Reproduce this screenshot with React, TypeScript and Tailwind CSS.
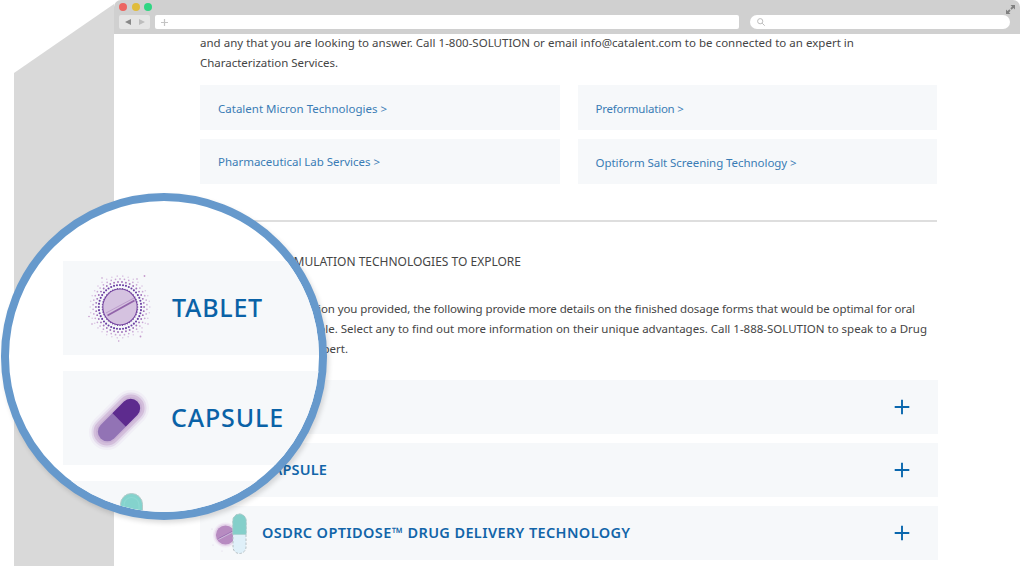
import React from 'react';

const ring = (count: number, radius: number, size: number, color: string, offset = 0) =>
  Array.from({ length: count }, (_, i) => {
    const a = ((i + offset) / count) * Math.PI * 2;
    return <circle key={`${radius}-${i}`} cx={40 + Math.cos(a) * radius} cy={39 + Math.sin(a) * radius * 1.04} r={size} fill={color} />;
  });

function TabletIcon() {
  return (
    <svg width="80" height="80" viewBox="0 0 80 80" className="shrink-0">
      <ellipse cx="40" cy="39" rx="17.2" ry="18" fill="#d5c2e0" stroke="#7646a0" strokeWidth="1.1" />
      {ring(44, 17.8, 0.6, '#6b3a9b')}
      {ring(44, 21.2, 1.05, '#6b3fa3')}
      {ring(38, 24.1, 0.95, '#a070b9')}
      {ring(38, 27, 0.85, '#c9a6d4', 0.5)}
      {ring(34, 29.8, 0.8, '#dcc6e4')}
      <path d="M26 45 54 30" stroke="#bd9dcc" strokeWidth="1" />
      <path d="M27.5 47.5 54.5 32.5" stroke="#9264aa" strokeWidth="1.9" />
      <g fill="#c49bcc">
        <circle cx="64.5" cy="8" r="0.9" /><circle cx="22" cy="10" r="0.8" /><circle cx="57" cy="11" r="0.8" />
        <circle cx="9" cy="48.5" r="0.8" /><circle cx="12" cy="56" r="0.8" /><circle cx="38.7" cy="73" r="0.8" />
        <circle cx="60.5" cy="68.5" r="0.9" /><circle cx="62" cy="64" r="0.7" /><circle cx="68" cy="56" r="0.7" />
      </g>
    </svg>
  );
}

function CapsuleIcon() {
  return (
    <svg width="80" height="80" viewBox="0 0 80 80" className="shrink-0">
      <g transform="translate(0 1.5) rotate(-45 39 40.5)">
        <rect x="4" y="22.5" width="70" height="36" rx="18" fill="#f1eff6" />
        <rect x="6.5" y="25" width="65" height="31" rx="15.5" fill="#e4dbec" />
        <rect x="8.5" y="27" width="61" height="27" rx="13.5" fill="#d3bedb" />
        <rect x="11" y="29.5" width="56" height="22" rx="11" fill="#c9b1d5" />
        <path d="M39 31H22.5a9.5 9.5 0 0 0 0 19H39z" fill="#9273b5" />
        <path d="M39 31h16.5a9.5 9.5 0 0 1 0 19H39z" fill="#5d2b8e" />
      </g>
    </svg>
  );
}

function OptidoseIcon() {
  return (
    <svg width="40" height="46" viewBox="0 0 40 46" className="shrink-0">
      <circle cx="15.5" cy="25" r="12.5" fill="#f1ebf5" />
      <circle cx="15.5" cy="25" r="11" fill="#e4d5ea" />
      <circle cx="15.5" cy="25" r="9.6" fill="#b78bc1" />
      <path d="M8.5 28.5 23 21" stroke="#9468ae" strokeWidth="0.8" />
      <path d="M8.5 29.5 23 22" stroke="#cdbfdd" strokeWidth="0.9" />
      <rect x="23" y="4" width="13" height="39.5" rx="6.5" fill="#dff0f9" stroke="#b6c0c4" strokeWidth="1" strokeDasharray="2.4 1.6" />
      <path d="M22.8 24.5V10.8a6.7 6.7 0 0 1 13.4 0v13.7z" fill="#84cfca" stroke="#a9cbc9" strokeWidth="0.6" />
      <g fill="#ddd2e6"><circle cx="2" cy="19" r=".6" /><circle cx="3" cy="35" r=".6" /><circle cx="12" cy="41" r=".6" /></g>
    </svg>
  );
}

function Plus() {
  return (
    <svg width="16" height="16" viewBox="0 0 16 16" className="shrink-0">
      <path d="M8 .7v14.6M.7 8h14.6" stroke="#0a67ae" strokeWidth="1.9" />
    </svg>
  );
}

function Toolbar() {
  return (
    <header className="flex h-[34px] shrink-0 flex-col rounded-t-[7px] bg-[#d0d0d0]">
      <div className="flex h-[15px] items-center justify-between pl-[5px] pr-[4px]">
        <div className="-mt-px flex gap-[4.5px]">
          <span className="size-2 rounded-full bg-[#ec6561]" />
          <span className="size-2 rounded-full bg-[#e0bc3c]" />
          <span className="size-2 rounded-full bg-[#2fd583]" />
        </div>
        <svg width="11" height="11" viewBox="0 0 11 11" className="mt-[3px]">
          <path d="M5.5 1H10v4.5zM1 5.5V10h4.5z" fill="#808080" />
          <path d="m6 5 2.5-2.5M5 6 2.5 8.5" stroke="#808080" strokeWidth="1.8" />
        </svg>
      </div>
      <div className="flex pl-[5px] pr-[10px]">
        <div className="flex h-[14px] w-[31px] items-center justify-between rounded-[2px] bg-[#e5e5e5] px-[5.5px]">
          <svg width="6" height="6" viewBox="0 0 6 6"><path d="M6 0v6L0 3z" fill="#888" /></svg>
          <svg width="6" height="6" viewBox="0 0 6 6"><path d="M0 0v6l6-3z" fill="#bdbdbd" /></svg>
        </div>
        <div className="ml-[5px] flex h-[14px] w-[584px] items-center rounded-[2px] bg-white pl-[6px]">
          <svg width="7" height="7" viewBox="0 0 7 7"><path d="M3.5 0v7M0 3.5h7" stroke="#c4c4c4" strokeWidth="1.2" /></svg>
        </div>
        <div className="ml-[11px] flex h-[14px] flex-1 items-center rounded-full bg-white pl-[7px]">
          <svg width="8" height="8" viewBox="0 0 8 8" fill="none" stroke="#bdbdbd" strokeWidth="1"><circle cx="3.2" cy="3.2" r="2.6" /><path d="m5.2 5.2 2.5 2.5" /></svg>
        </div>
      </div>
    </header>
  );
}

function LinkCard({ text, className }: { text: string; className: string }) {
  return (
    <a className={`flex h-[45px] items-center bg-[#f6f8fa] pl-[18px] whitespace-nowrap text-[#3a7cb5] ${className}`}>{text}</a>
  );
}

function Lens() {
  return (
    <div className="absolute left-[1px] top-[193px] h-[327px] w-[326px] overflow-hidden rounded-full border-8 border-[#6699cc] bg-white pl-[54px] pt-[60px] shadow-[2px_3px_5px_rgba(0,0,0,0.14)]">
      <div className="flex w-[290px] flex-col gap-4 text-[25px] font-medium text-[#0a62a7]">
        <div className="flex h-[94px] items-center bg-[#f6f8fa] pl-[17px]">
          <TabletIcon />
          <span className="ml-[12px] pb-[2px] tracking-[0.75px]">TABLET</span>
        </div>
        <div className="flex h-[93.5px] items-center bg-[#f6f8fa] pl-[17px]">
          <CapsuleIcon />
          <span className="ml-[11px] pb-[2px] tracking-[0.85px]">CAPSULE</span>
        </div>
        <div className="flex h-[94px] items-start bg-[#f6f8fa] pl-[57px] pt-[12px]">
          <svg width="23" height="50" viewBox="0 0 23 50">
            <rect x=".5" y=".5" width="22" height="60" rx="11" fill="#84d3cd" stroke="#b3c9c8" />
            <path d="M4 50V12a7.5 7.5 0 0 1 15 0v38" fill="none" stroke="#8dd8d2" strokeWidth="1.2" />
          </svg>
        </div>
      </div>
    </div>
  );
}

export default function App() {
  return (
    <div className="relative flex h-[566px] w-[1020px] overflow-hidden bg-white pl-[14px] font-['Noto_Sans','Open_Sans',sans-serif] text-[11.5px] leading-5 text-[#454545]">
      <div className="h-full w-[100px] shrink-0 bg-[#d9d9d9] [clip-path:polygon(0_73px,100%_4px,100%_100%,0_100%)]" />
      <div className="flex w-[906px] flex-col">
        <Toolbar />
        <main className="ml-[86px] w-[738px] whitespace-nowrap">
          <div className="-mt-px">
            <p className="tracking-[0.018px]">and any that you are looking to answer. Call 1-800-SOLUTION or email info@catalent.com to be connected to an expert in</p>
            <p className="tracking-[-0.025px]">Characterization Services.</p>
          </div>
          <div className="mt-[12px] grid w-[737px] grid-cols-2 gap-x-[18px] gap-y-[9px]">
            <LinkCard text="Catalent Micron Technologies >" className="pt-[2px] tracking-[0.01px]" />
            <LinkCard text="Preformulation >" className="pt-[2px] tracking-[-0.22px]" />
            <LinkCard text="Pharmaceutical Lab Services >" className="tracking-[-0.02px]" />
            <LinkCard text="Optiform Salt Screening Technology >" className="pt-[2px] tracking-[-0.06px]" />
          </div>
          <div className="mt-[36px] h-[2px] w-[737px] bg-[#dedede]" />
          <h2 className="mt-[30px] flex w-[321px] justify-end text-[12px]">FORMULATION TECHNOLOGIES TO EXPLORE</h2>
          <div className="mt-[27px] flex flex-col">
            <p className="flex w-[715px] justify-end tracking-[-0.09px]">information you provided, the following provide more details on the finished dosage forms that would be optimal for oral</p>
            <p className="flex w-[727px] justify-end tracking-[-0.008px]">available. Select any to find out more information on their unique advantages. Call 1-888-SOLUTION to speak to a Drug</p>
            <p className="flex w-[148px] justify-end">expert.</p>
          </div>
          <div className="mt-[21px] flex flex-col gap-[9px] text-[14.5px] font-semibold text-[#1265a9]">
            <div className="flex h-[54px] items-center justify-end bg-[#f6f8fa] pr-[28px]"><Plus /></div>
            <div className="flex h-[54px] items-center justify-between bg-[#f6f8fa] pl-[63px] pr-[28px]">
              <span className="pb-[2px] tracking-[0.2px]">CAPSULE</span><Plus />
            </div>
            <div className="flex h-[54px] items-center bg-[#f6f8fa] pl-[10px] pr-[28px]">
              <OptidoseIcon />
              <span className="ml-[12px] flex-1 pb-[2px] tracking-[0.38px]">OSDRC OPTIDOSE™ DRUG DELIVERY TECHNOLOGY</span><Plus />
            </div>
          </div>
        </main>
      </div>
      <Lens />
    </div>
  );
}
